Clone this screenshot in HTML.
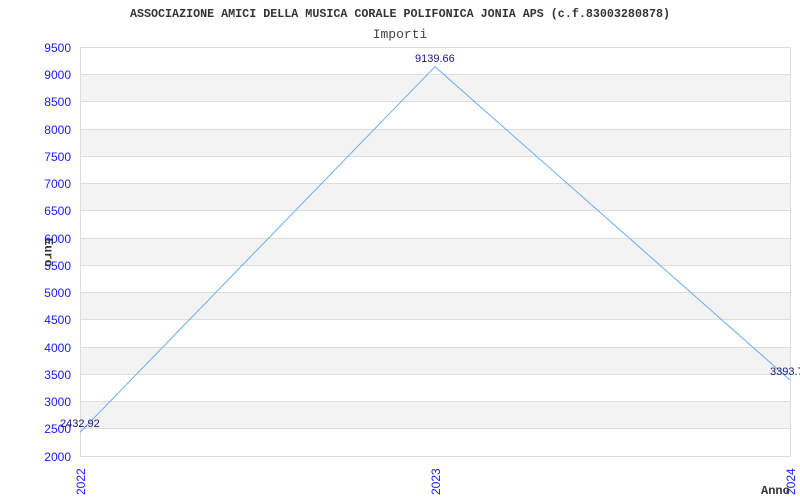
<!DOCTYPE html>
<html><head><style>body{margin:0;background:#fff}svg{display:block}</style></head><body>
<svg width="800" height="500" xmlns="http://www.w3.org/2000/svg">
<rect width="800" height="500" fill="#fff"/>
<g fill="#f3f3f3">
<rect x="80" y="74.3" width="710" height="27.3"/>
<rect x="80" y="128.8" width="710" height="27.3"/>
<rect x="80" y="183.3" width="710" height="27.3"/>
<rect x="80" y="237.9" width="710" height="27.3"/>
<rect x="80" y="292.4" width="710" height="27.3"/>
<rect x="80" y="346.9" width="710" height="27.3"/>
<rect x="80" y="401.5" width="710" height="27.3"/>
</g>
<g stroke="#dddddd" stroke-width="1">
<line x1="80" y1="47.5" x2="790" y2="47.5"/><line x1="80" y1="74.5" x2="790" y2="74.5"/><line x1="80" y1="101.5" x2="790" y2="101.5"/><line x1="80" y1="129.5" x2="790" y2="129.5"/><line x1="80" y1="156.5" x2="790" y2="156.5"/><line x1="80" y1="183.5" x2="790" y2="183.5"/><line x1="80" y1="210.5" x2="790" y2="210.5"/><line x1="80" y1="238.5" x2="790" y2="238.5"/><line x1="80" y1="265.5" x2="790" y2="265.5"/><line x1="80" y1="292.5" x2="790" y2="292.5"/><line x1="80" y1="319.5" x2="790" y2="319.5"/><line x1="80" y1="347.5" x2="790" y2="347.5"/><line x1="80" y1="374.5" x2="790" y2="374.5"/><line x1="80" y1="401.5" x2="790" y2="401.5"/><line x1="80" y1="428.5" x2="790" y2="428.5"/><line x1="80" y1="456.5" x2="790" y2="456.5"/>
<line x1="80.5" y1="47" x2="80.5" y2="457"/><line x1="790.5" y1="47" x2="790.5" y2="457"/>
</g>
<polyline points="80,432.4 435,66.7 790,380" fill="none" stroke="#6aaef0" stroke-width="1"/>
<g font-family="Liberation Sans, sans-serif" font-size="12" fill="#1a1aff" text-anchor="end">
<text x="71" y="52">9500</text><text x="71" y="79">9000</text><text x="71" y="106">8500</text><text x="71" y="134">8000</text><text x="71" y="161">7500</text><text x="71" y="188">7000</text><text x="71" y="215">6500</text><text x="71" y="243">6000</text><text x="71" y="270">5500</text><text x="71" y="297">5000</text><text x="71" y="324">4500</text><text x="71" y="352">4000</text><text x="71" y="379">3500</text><text x="71" y="406">3000</text><text x="71" y="433">2500</text><text x="71" y="461">2000</text>
</g>
<g font-family="Liberation Sans, sans-serif" font-size="12" fill="#1a1aff">
<text transform="translate(85,495) rotate(-90)">2022</text>
<text transform="translate(440,495) rotate(-90)">2023</text>
<text transform="translate(795,495) rotate(-90)">2024</text>
</g>
<g font-family="Liberation Sans, sans-serif" font-size="11" fill="#1a1a80">
<text x="60" y="427">2432.92</text>
<text x="415" y="62">9139.66</text>
<text x="770" y="375">3393.7</text>
</g>
<text x="400" y="17" text-anchor="middle" font-family="Liberation Mono, monospace" font-size="11.7" font-weight="bold" fill="#333">ASSOCIAZIONE AMICI DELLA MUSICA CORALE POLIFONICA JONIA APS (c.f.83003280878)</text>
<text x="400" y="38" text-anchor="middle" font-family="Liberation Mono, monospace" font-size="13" fill="#444">Importi</text>
<text transform="translate(45,238) rotate(90)" font-family="Liberation Mono, monospace" font-size="12" font-weight="bold" fill="#333">Euro</text>
<text x="761" y="494" font-family="Liberation Mono, monospace" font-size="12" font-weight="bold" fill="#333">Anno</text>
</svg>
</body></html>
